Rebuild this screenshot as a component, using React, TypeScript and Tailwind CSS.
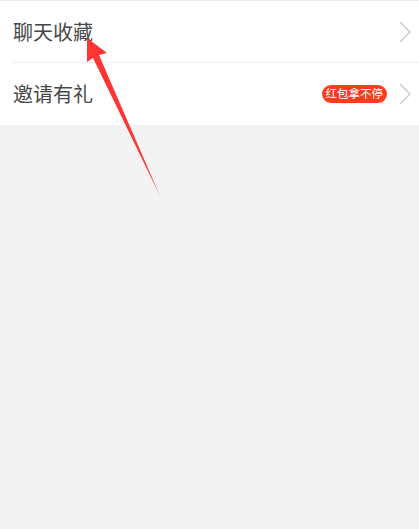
export default function App() {
  const rows = [
    { label: "聊天收藏", badge: null as string | null },
    { label: "邀请有礼", badge: "红包拿不停" },
  ];

  return (
    <div
      className="relative w-[419px] h-[529px] bg-[#f3f3f3] overflow-hidden"
      style={{ fontFamily: '"Noto Sans CJK SC", "Noto Sans", sans-serif' }}
    >
      <div className="bg-white border-t border-[#ececec] pl-[13px]">
        {rows.map((row, i) => (
          <div
            key={i}
            className={`flex items-center h-[62px] pr-[8px] ${i === 0 ? "border-b border-[#eeeeee]" : ""}`}
          >
            <span className="text-[20px] text-[#474747] leading-none flex-1">{row.label}</span>
            {row.badge && (
              <span className="mr-[12px] h-[18px] flex items-center rounded-full bg-[#ff3b1c] text-white text-[11.5px] leading-none px-[4px]">
                {row.badge}
              </span>
            )}
            <svg width="12" height="22" viewBox="0 0 12 22" className="shrink-0">
              <polyline points="1,1 11,11 1,21" fill="none" stroke="#cccccc" strokeWidth="1.5" />
            </svg>
          </div>
        ))}
      </div>

      {/* 红色箭头 */}
      <svg className="absolute left-0 top-0" width="419" height="529" viewBox="0 0 419 529">
        <polygon points="87,38 87,62 93,58 160,196 99,55 107,53" fill="#ff3535" />
      </svg>
    </div>
  );
}
